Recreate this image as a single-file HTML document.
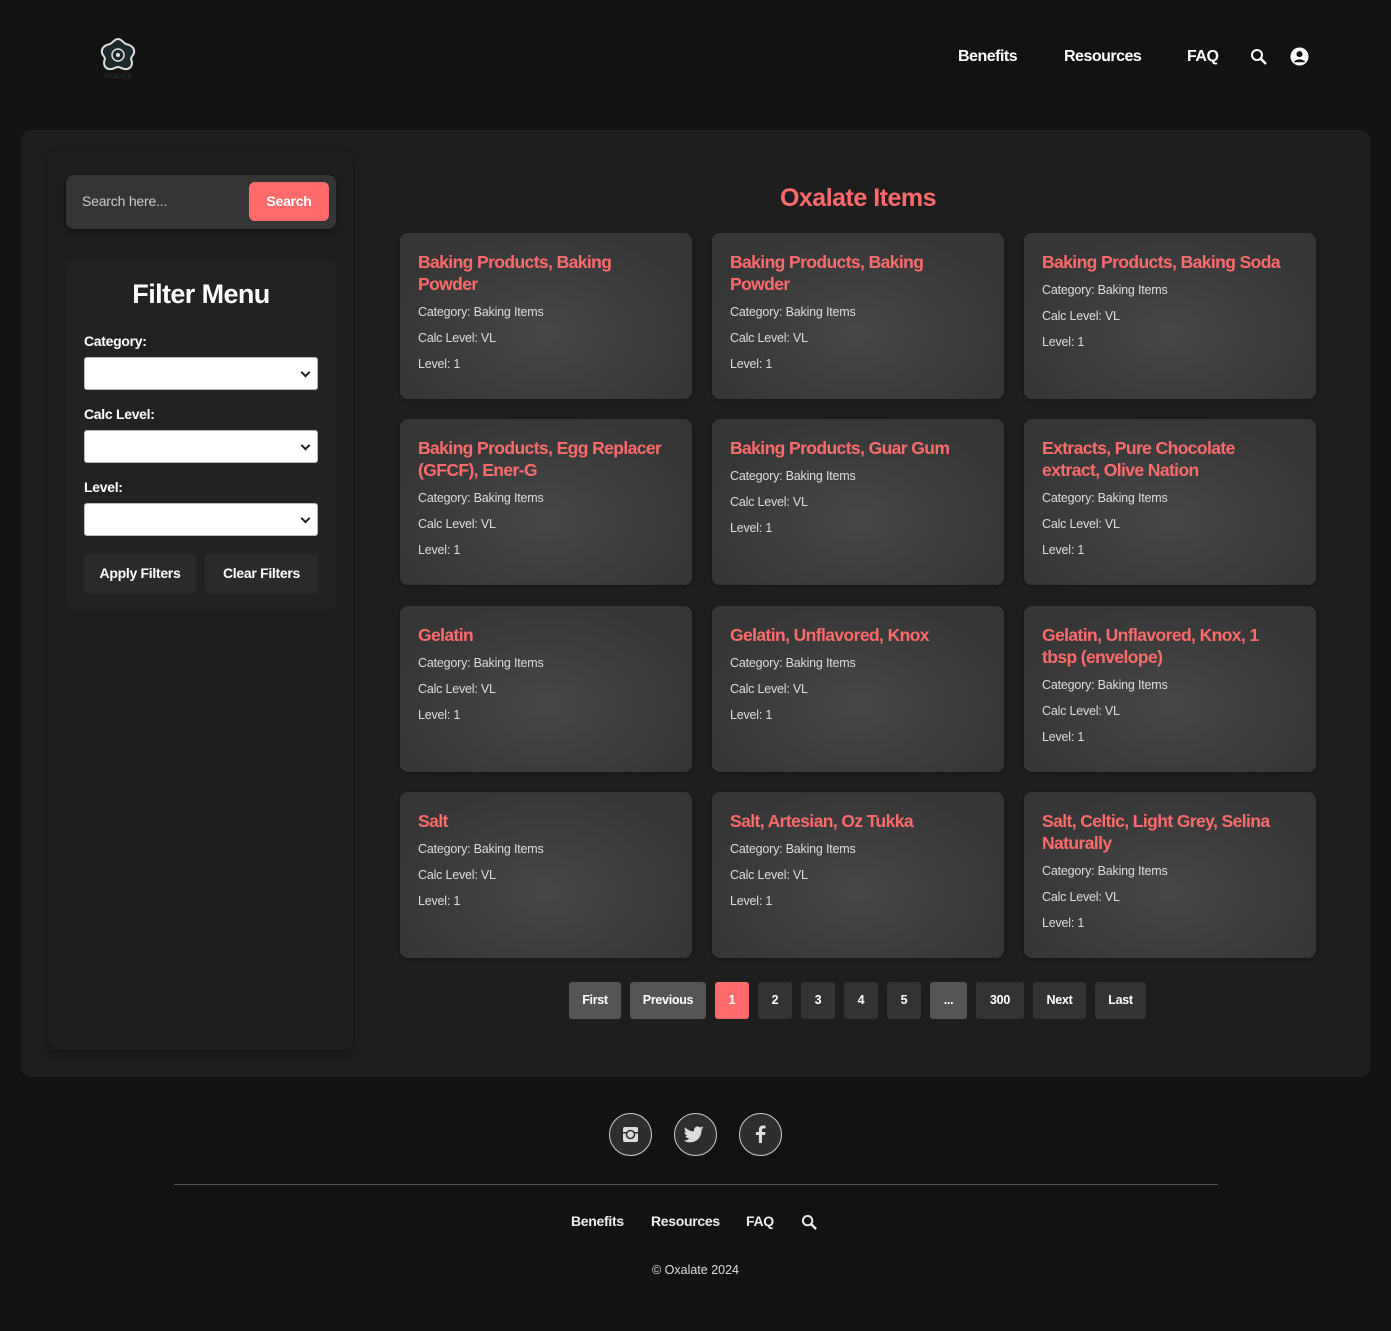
<!DOCTYPE html>
<html><head><meta charset="utf-8"><style>
*{box-sizing:border-box;margin:0;padding:0}
body{width:1391px;height:1331px;background:#121212;font-family:"Liberation Sans",Arial,sans-serif;color:#fff;position:relative;overflow:hidden}
.abs{position:absolute}
.nav a{position:absolute;top:48px;font-weight:bold;font-size:16px;color:#fff;letter-spacing:-0.5px}
.main{left:21px;top:130px;width:1349px;height:947px;background:#1e1e1e;border-radius:10px}
.side{left:48px;top:150px;width:305px;height:900px;background:#1e1e1e;border-radius:10px;box-shadow:0 3px 8px rgba(0,0,0,.35)}
.sb{left:66px;top:175px;width:270px;height:54px;background:#353535;border-radius:8px;box-shadow:0 2px 6px rgba(0,0,0,.4)}
.fm{left:66px;top:260px;width:270px;height:350px;background:#222;border-radius:8px}
.lbl{font-weight:bold;font-size:14px;color:#fff;letter-spacing:-0.3px}
.sel{width:234px;height:33px;background:#fff;border:1px solid #bbb;border-radius:3px}
.sel:after{content:"";position:absolute;right:8px;top:11px;width:5px;height:5px;border-right:2px solid #222;border-bottom:2px solid #222;transform:rotate(45deg)}
.btn{background:#2a2a2a;border-radius:3px;font-size:14px;font-weight:bold;text-align:center;line-height:38px;height:40px;letter-spacing:-0.3px}
.card{width:292px;height:166px;border-radius:8px;background:radial-gradient(ellipse at 50% 60%,#474747,#363636 75%);padding:18px 18px;box-shadow:0 1px 3px rgba(0,0,0,.3)}
.card h3{color:#ff6b6b;font-size:17.5px;line-height:22px;font-weight:bold;margin-bottom:4px;letter-spacing:-0.6px;white-space:nowrap}
.card p{font-size:12.5px;color:#ddd;line-height:26px;letter-spacing:-0.2px}
.pg{top:982px;height:37px;line-height:37px;font-size:12.5px;font-weight:bold;text-align:center;border-radius:3px;background:#333;color:#fff;letter-spacing:-0.3px}
.soc{top:1113px;width:43px;height:43px;border:1.5px solid #ccc;border-radius:50%;background:#2e2e2e}
.fl{top:1213px;font-weight:bold;font-size:14px;color:#eee;letter-spacing:-0.3px}
</style></head><body>
<svg class="abs" style="left:98px;top:35px" width="40" height="44" viewBox="0 0 40 44"><path d="M20 4c4 0 5 4 8 5 5 1 9 4 8 9-1 3-3 4-3 6 2 4 1 9-4 10-4 1-6-2-9-2s-5 3-9 2c-5-1-6-6-4-10 0-2-2-3-3-6-1-5 3-8 8-9 3-1 4-5 8-5z" fill="#1c2a2c" stroke="#ddd" stroke-width="2"/><circle cx="20" cy="20" r="6" fill="none" stroke="#ddd" stroke-width="1.5"/><circle cx="20" cy="20" r="2" fill="#ddd"/><text x="20" y="43" font-size="6" fill="#2a3a40" text-anchor="middle">OXALATE</text></svg>
<div class="nav"><a style="left:958px">Benefits</a><a style="left:1064px">Resources</a><a style="left:1187px">FAQ</a></div>
<svg class="abs" style="left:1250px;top:48px" width="18" height="18" viewBox="0 0 18 18"><circle cx="7" cy="7" r="5" fill="none" stroke="#fff" stroke-width="2"/><path d="M11 11l5 5" stroke="#fff" stroke-width="2.5"/></svg>
<svg class="abs" style="left:1290px;top:47px" width="19" height="19" viewBox="0 0 20 20"><circle cx="10" cy="10" r="9.5" fill="#fff"/><circle cx="10" cy="7.5" r="3.2" fill="#121212"/><path d="M4 16c2-4 10-4 12 0" fill="#121212"/></svg>
<div class="abs main"></div>
<div class="abs side"></div>
<div class="abs sb"></div>
<div class="abs" style="left:82px;top:193px;font-size:14px;color:#ccc;letter-spacing:-0.2px">Search here...</div>
<div class="abs" style="left:249px;top:182px;width:80px;height:39px;background:#ff6b6b;border-radius:6px;text-align:center;line-height:39px;font-weight:bold;font-size:14px;letter-spacing:-0.3px">Search</div>
<div class="abs fm"></div>
<div class="abs" style="left:66px;width:270px;top:279px;text-align:center;font-size:27px;font-weight:bold;letter-spacing:-0.6px">Filter Menu</div>
<div class="abs lbl" style="left:84px;top:333px">Category:</div>
<div class="abs sel" style="left:84px;top:357px"></div>
<div class="abs lbl" style="left:84px;top:406px">Calc Level:</div>
<div class="abs sel" style="left:84px;top:430px"></div>
<div class="abs lbl" style="left:84px;top:479px">Level:</div>
<div class="abs sel" style="left:84px;top:503px"></div>
<div class="abs btn" style="left:84px;top:554px;width:112px">Apply Filters</div>
<div class="abs btn" style="left:205px;top:554px;width:113px">Clear Filters</div>
<div class="abs" style="left:400px;width:916px;top:184px;text-align:center;color:#ff6b6b;font-size:25px;font-weight:bold;letter-spacing:-0.5px">Oxalate Items</div>

<div class="abs card" style="left:400px;top:233px"><h3>Baking Products, Baking<br>Powder</h3><p>Category: Baking Items</p><p>Calc Level: VL</p><p>Level: 1</p></div>
<div class="abs card" style="left:712px;top:233px"><h3>Baking Products, Baking<br>Powder</h3><p>Category: Baking Items</p><p>Calc Level: VL</p><p>Level: 1</p></div>
<div class="abs card" style="left:1024px;top:233px"><h3>Baking Products, Baking Soda</h3><p>Category: Baking Items</p><p>Calc Level: VL</p><p>Level: 1</p></div>
<div class="abs card" style="left:400px;top:419px"><h3>Baking Products, Egg Replacer<br>(GFCF), Ener-G</h3><p>Category: Baking Items</p><p>Calc Level: VL</p><p>Level: 1</p></div>
<div class="abs card" style="left:712px;top:419px"><h3>Baking Products, Guar Gum</h3><p>Category: Baking Items</p><p>Calc Level: VL</p><p>Level: 1</p></div>
<div class="abs card" style="left:1024px;top:419px"><h3>Extracts, Pure Chocolate<br>extract, Olive Nation</h3><p>Category: Baking Items</p><p>Calc Level: VL</p><p>Level: 1</p></div>
<div class="abs card" style="left:400px;top:606px"><h3>Gelatin</h3><p>Category: Baking Items</p><p>Calc Level: VL</p><p>Level: 1</p></div>
<div class="abs card" style="left:712px;top:606px"><h3>Gelatin, Unflavored, Knox</h3><p>Category: Baking Items</p><p>Calc Level: VL</p><p>Level: 1</p></div>
<div class="abs card" style="left:1024px;top:606px"><h3>Gelatin, Unflavored, Knox, 1<br>tbsp (envelope)</h3><p>Category: Baking Items</p><p>Calc Level: VL</p><p>Level: 1</p></div>
<div class="abs card" style="left:400px;top:792px"><h3>Salt</h3><p>Category: Baking Items</p><p>Calc Level: VL</p><p>Level: 1</p></div>
<div class="abs card" style="left:712px;top:792px"><h3>Salt, Artesian, Oz Tukka</h3><p>Category: Baking Items</p><p>Calc Level: VL</p><p>Level: 1</p></div>
<div class="abs card" style="left:1024px;top:792px"><h3>Salt, Celtic, Light Grey, Selina<br>Naturally</h3><p>Category: Baking Items</p><p>Calc Level: VL</p><p>Level: 1</p></div>

<div class="abs pg" style="left:569px;width:52px;background:#555">First</div>
<div class="abs pg" style="left:630px;width:76px;background:#555">Previous</div>
<div class="abs pg" style="left:715px;width:34px;background:#ff6b6b">1</div>
<div class="abs pg" style="left:758px;width:34px">2</div>
<div class="abs pg" style="left:801px;width:34px">3</div>
<div class="abs pg" style="left:844px;width:34px">4</div>
<div class="abs pg" style="left:887px;width:34px">5</div>
<div class="abs pg" style="left:930px;width:37px;background:#555">...</div>
<div class="abs pg" style="left:976px;width:48px">300</div>
<div class="abs pg" style="left:1033px;width:53px">Next</div>
<div class="abs pg" style="left:1095px;width:51px">Last</div>

<div class="abs soc" style="left:609px"><svg width="40" height="40" viewBox="0 0 40 40"><rect x="13" y="13" width="15" height="15" rx="2" fill="#ddd"/><rect x="13" y="18" width="15" height="1.5" fill="#2e2e2e"/><circle cx="20.5" cy="20.5" r="4" fill="#ddd" stroke="#2e2e2e" stroke-width="1.5"/></svg></div>
<div class="abs soc" style="left:674px"><svg width="40" height="40" viewBox="0 0 40 40"><path d="M29 14c-1 .5-2 .7-3 .8 1-.6 2-1.6 2-2.6-1 .6-2 1-3 1.2-2-2-6-1-6 3v1c-4 0-7-2-9-4-1 2 0 4 1.5 5-.8 0-1.5-.3-2-.5 0 2 1.5 3.5 3 4-.6.2-1.3.2-2 0 .5 1.6 2 2.7 4 2.7-2 1.5-4 2-6 1.800 8 5 18 0 18-10v-.5c1-.7 1.8-1.5 2.5-2.5z" fill="#ddd"/></svg></div>
<div class="abs soc" style="left:739px"><svg width="40" height="40" viewBox="0 0 40 40"><path d="M22 29v-8h3l.5-3H22v-2c0-1 .4-1.6 1.7-1.6h1.9v-2.7c-.4 0-1.4-.2-2.7-.2-2.7 0-4 1.6-4 4.2V18h-3v3h3v8z" fill="#ddd"/></svg></div>
<div class="abs" style="left:174px;top:1184px;width:1044px;height:1px;background:#555"></div>
<div class="abs fl" style="left:571px">Benefits</div>
<div class="abs fl" style="left:651px">Resources</div>
<div class="abs fl" style="left:746px">FAQ</div>
<svg class="abs" style="left:801px;top:1214px" width="17" height="17" viewBox="0 0 18 18"><circle cx="7" cy="7" r="5" fill="none" stroke="#eee" stroke-width="2"/><path d="M11 11l5 5" stroke="#eee" stroke-width="2.5"/></svg>
<div class="abs" style="left:0;width:1391px;top:1263px;text-align:center;font-size:12.5px;color:#ddd">© Oxalate 2024</div>
</body></html>
